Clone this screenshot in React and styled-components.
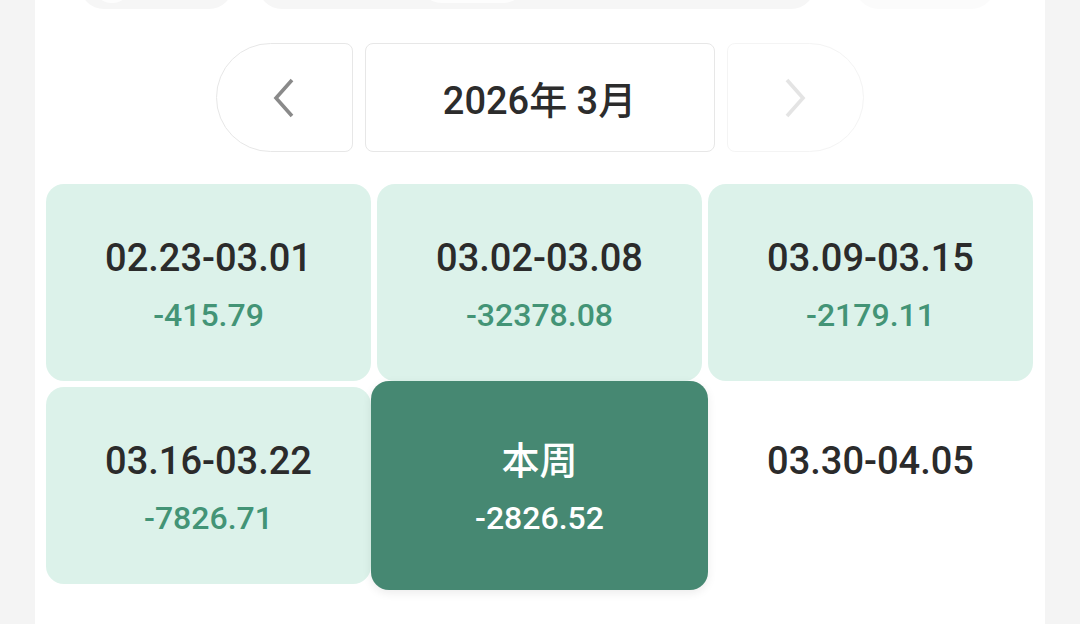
import React from "react";
import styled, { createGlobalStyle } from "styled-components";

const Global = createGlobalStyle`
  html, body { margin: 0; padding: 0; background: #f4f4f4; overflow: hidden; }
  body { font-family: Roboto, "Noto Sans CJK SC", sans-serif; }
`;

const Panel = styled.div`
  width: 1010px;
  margin-left: 35px;
  height: 624px;
  background: #ffffff;
  box-sizing: border-box;
  padding: 0 12px 0 11px;
  display: flex;
  flex-direction: column;
`;

const TabRow = styled.div`
  margin-top: -40px;
  height: 49px;
  display: flex;
  padding-left: 34px;
`;

const Tab = styled.div`
  width: ${(p) => p.$w}px;
  margin-right: ${(p) => p.$gap || 0}px;
  height: 49px;
  border-radius: 24px;
  background: ${(p) => (p.$faint ? "#fbfbfb" : "#f6f6f6")};
  position: relative;
`;

const TabInner = styled.div`
  position: absolute;
  left: ${(p) => p.$left}px;
  width: ${(p) => p.$w}px;
  top: 0;
  height: 43px;
  border-radius: 22px;
  background: #fdfdfd;
`;

const Nav = styled.div`
  margin-top: 34px;
  display: flex;
  justify-content: center;
  gap: 12px;
  height: 109px;
`;

const NavButton = styled.div`
  width: 137px;
  box-sizing: border-box;
  border: 1px solid #e7e7e7;
  border-radius: ${(p) => (p.$side === "left" ? "55px 8px 8px 55px" : "8px 55px 55px 8px")};
  display: flex;
  align-items: center;
  justify-content: center;
  opacity: ${(p) => (p.$disabled ? 0.45 : 1)};
  color: ${(p) => (p.$disabled ? "#c4c4c4" : "#8a8a8a")};
`;

const MonthBox = styled.div`
  width: 350px;
  box-sizing: border-box;
  border: 1px solid #e7e7e7;
  border-radius: 8px;
  display: flex;
  align-items: center;
  justify-content: center;
  font-size: 38px;
  font-weight: 500;
  color: #2c2c2c;
`;

const Grid = styled.div`
  margin-top: 32px;
  display: grid;
  grid-template-columns: repeat(3, 325px);
  grid-auto-rows: 197px;
  column-gap: 6px;
  row-gap: 6px;
`;

const Card = styled.div`
  position: relative;
  border-radius: 18px;
  background: ${(p) => (p.$active ? "#468872" : p.$empty ? "transparent" : "#dcf2ea")};
  margin: ${(p) => (p.$active ? "-6px" : "0")};
  z-index: ${(p) => (p.$active ? 1 : 0)};
  box-shadow: ${(p) => (p.$active ? "0 3px 10px rgba(0,0,0,0.08)" : "none")};
  display: flex;
  flex-direction: column;
  align-items: center;
  justify-content: center;
  gap: 15px;
  padding-top: 3px;
  box-sizing: border-box;
`;

const Label = styled.div`
  font-size: 38px;
  font-weight: 500;
  line-height: 46px;
  color: ${(p) => (p.$active ? "#ffffff" : "#2b2b2b")};
`;

const Amount = styled.div`
  font-size: 32px;
  font-weight: 500;
  line-height: 38px;
  color: ${(p) => (p.$active ? "#ffffff" : "#439476")};
`;

const Chevron = ({ dir }) => (
  <svg width="26" height="40" viewBox="0 0 26 40" fill="none">
    <path
      d={dir === "left" ? "M21 2 L5 20 L21 38" : "M5 2 L21 20 L5 38"}
      stroke="currentColor"
      strokeWidth="3.6"
      strokeLinecap="butt"
      strokeLinejoin="miter"
    />
  </svg>
);

const weeks = [
  { label: "02.23-03.01", amount: "-415.79" },
  { label: "03.02-03.08", amount: "-32378.08" },
  { label: "03.09-03.15", amount: "-2179.11" },
  { label: "03.16-03.22", amount: "-7826.71" },
  { label: "本周", amount: "-2826.52", active: true },
  { label: "03.30-04.05", empty: true },
];

export default function App() {
  return (
    <>
      <Global />
      <Panel>
        <TabRow>
          <Tab $w={153} $gap={25}>
            <TabInner $left={12} $w={40} />
          </Tab>
          <Tab $w={557} $gap={40}>
            <TabInner $left={162} $w={105} />
          </Tab>
          <Tab $w={140} $faint />
        </TabRow>
        <Nav>
          <NavButton $side="left">
            <Chevron dir="left" />
          </NavButton>
          <MonthBox>2026年 3月</MonthBox>
          <NavButton $side="right" $disabled>
            <Chevron dir="right" />
          </NavButton>
        </Nav>
        <Grid>
          {weeks.map((w) => (
            <Card key={w.label} $active={w.active} $empty={w.empty}>
              <Label $active={w.active}>{w.label}</Label>
              {w.amount && <Amount $active={w.active}>{w.amount}</Amount>}
              {w.empty && <Amount style={{ visibility: "hidden" }}>0</Amount>}
            </Card>
          ))}
        </Grid>
      </Panel>
    </>
  );
}
